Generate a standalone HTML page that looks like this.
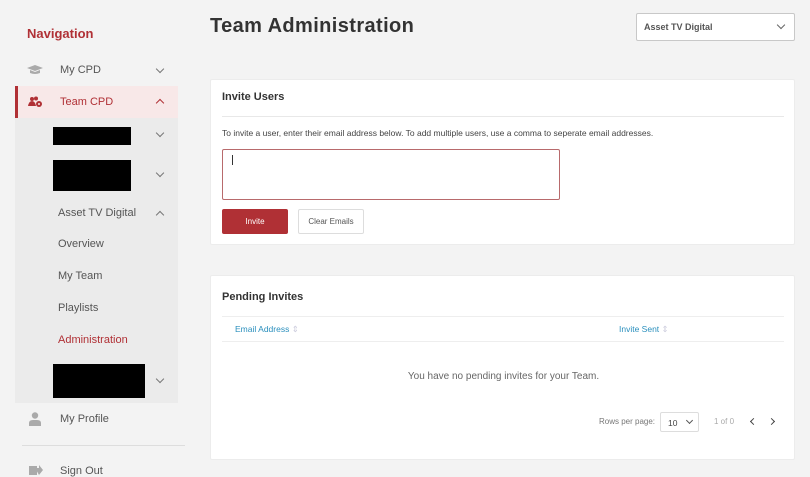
<!DOCTYPE html>
<html><head><meta charset="utf-8"><style>
*{box-sizing:border-box;margin:0;padding:0}
body{width:810px;height:473px;overflow:hidden;background:#f3f3f3;font-family:"Liberation Sans",sans-serif;position:relative;color:#555}
.a{position:absolute}
.nav{left:27px;top:26px;font-size:13px;font-weight:bold;color:#b03035}
.item{font-size:11px;color:#555}
.chev{position:absolute;width:6px;height:6px;border-right:1.5px solid #777;border-bottom:1.5px solid #777;transform:rotate(45deg)}
.up{transform:rotate(-135deg)}
.blk{background:#000;position:absolute}
.card{background:#fff;border:1px solid #ececec;border-radius:2px}
h2{font-size:11px;font-weight:bold;color:#333;position:absolute}
</style></head><body>
<div class="a nav">Navigation</div>
<svg class="a" style="left:27px;top:65px" width="16" height="10" viewBox="0 0 16 10"><path d="M0 3 L8 0 L16 3 L8 6Z" fill="#aaa"/><path d="M3 5 V8 Q8 10 13 8 V5 L8 7Z" fill="#aaa"/></svg>
<div class="a item" style="left:60px;top:64px">My CPD</div>
<div class="chev" style="left:157px;top:66px"></div>
<div class="a" style="left:15px;top:86px;width:163px;height:32px;background:#f8e8e8;border-left:3px solid #b03035"></div>
<svg class="a" style="left:28px;top:96px" width="15" height="12" viewBox="0 0 15 12"><circle cx="4" cy="3" r="2" fill="#b03035"/><circle cx="8" cy="2.5" r="2" fill="#b03035"/><path d="M0 10 Q1 5 4 5 Q7 5 8 10Z" fill="#b03035"/><circle cx="11" cy="8" r="3" fill="#b03035"/><circle cx="11" cy="8" r="1" fill="#f8e8e8"/></svg>
<div class="a item" style="left:60px;top:96px;color:#b03035">Team CPD</div>
<div class="chev up" style="left:157px;top:100px;border-color:#b03035"></div>
<div class="a" style="left:15px;top:118px;width:163px;height:285px;background:#ebebeb"></div>
<div class="blk" style="left:53px;top:127px;width:78px;height:18px"></div>
<div class="chev" style="left:157px;top:130px"></div>
<div class="blk" style="left:53px;top:160px;width:78px;height:31px"></div>
<div class="chev" style="left:157px;top:170px"></div>
<div class="a item" style="left:58px;top:207px">Asset TV Digital</div>
<div class="chev up" style="left:157px;top:212px"></div>
<div class="a item" style="left:58px;top:238px">Overview</div>
<div class="a item" style="left:58px;top:270px">My Team</div>
<div class="a item" style="left:58px;top:302px">Playlists</div>
<div class="a item" style="left:58px;top:334px;color:#b03035">Administration</div>
<div class="blk" style="left:53px;top:364px;width:92px;height:34px"></div>
<div class="chev" style="left:157px;top:376px"></div>
<svg class="a" style="left:29px;top:412px" width="12" height="14" viewBox="0 0 12 14"><circle cx="6" cy="3.5" r="3.2" fill="#aaa"/><path d="M0 14 V11 Q0 8 4 8 H8 Q12 8 12 11 V14Z" fill="#aaa"/></svg>
<div class="a item" style="left:60px;top:413px">My Profile</div>
<div class="a" style="left:22px;top:445px;width:163px;height:1px;background:#ddd"></div>
<svg class="a" style="left:29px;top:465px" width="14" height="10"><rect x="0" y="1" width="8" height="9" fill="#aaa"/><path d="M6 3 H10 V0 L14 5 L10 10Z" fill="#aaa"/></svg>
<div class="a item" style="left:60px;top:465px">Sign Out</div>

<div class="a" style="left:210px;top:15px;font-size:20px;font-weight:bold;color:#333;letter-spacing:0.4px">Team Administration</div>
<div class="a" style="left:636px;top:13px;width:159px;height:28px;background:#fff;border:1px solid #c8c8c8;border-radius:2px"><span class="a" style="left:7px;top:8px;font-size:9px;font-weight:bold;color:#555">Asset TV Digital</span><div class="chev" style="left:141px;top:8px;border-color:#666;border-width:0 1px 1px 0"></div></div>

<div class="a card" style="left:210px;top:79px;width:585px;height:166px">
<h2 style="left:11px;top:11px">Invite Users</h2>
<div class="a" style="left:11px;top:36px;width:562px;height:1px;background:#e8e8e8"></div>
<div class="a" style="left:11px;top:48px;font-size:8.5px;color:#444">To invite a user, enter their email address below. To add multiple users, use a comma to seperate email addresses.</div>
<div class="a" style="left:11px;top:69px;width:338px;height:51px;border:1px solid #b86a6c;border-radius:2px"><div class="a" style="left:9px;top:5px;width:1px;height:10px;background:#333"></div></div>
<div class="a" style="left:11px;top:129px;width:66px;height:25px;background:#b03035;border-radius:2px;color:#fff;font-size:8px;text-align:center;line-height:25px">Invite</div>
<div class="a" style="left:87px;top:129px;width:66px;height:25px;border:1px solid #ddd;border-radius:2px;color:#555;font-size:8px;text-align:center;line-height:23px">Clear Emails</div>
</div>

<div class="a card" style="left:210px;top:275px;width:585px;height:185px">
<h2 style="left:11px;top:15px">Pending Invites</h2>
<div class="a" style="left:11px;top:40px;width:562px;height:1px;background:#eee"></div>
<div class="a" style="left:24px;top:48px;font-size:8.5px;color:#2a8fbd">Email Address <span style="color:#ccd">⇕</span></div>
<div class="a" style="left:408px;top:48px;font-size:8.5px;color:#2a8fbd">Invite Sent <span style="color:#ccd">⇕</span></div>
<div class="a" style="left:11px;top:65px;width:562px;height:1px;background:#eee"></div>
<div class="a" style="left:0;top:95px;width:585px;text-align:center;font-size:10px;color:#666">You have no pending invites for your Team.</div>
<div class="a" style="left:388px;top:141px;font-size:8px;color:#777">Rows per page:</div>
<div class="a" style="left:449px;top:136px;width:39px;height:20px;border:1px solid #ddd;border-radius:2px"><span class="a" style="left:7px;top:5px;font-size:8.5px;color:#444">10</span><div class="chev" style="left:26px;top:5px;width:5px;height:5px;border-color:#555;border-width:0 1px 1px 0"></div></div>
<div class="a" style="left:503px;top:141px;font-size:8px;color:#aaa">1 of 0</div>
<div class="chev" style="left:540px;top:143px;width:5px;height:5px;transform:rotate(135deg);border-color:#444"></div>
<div class="chev" style="left:558px;top:143px;width:5px;height:5px;transform:rotate(-45deg);border-color:#444"></div>
</div>
</body></html>
